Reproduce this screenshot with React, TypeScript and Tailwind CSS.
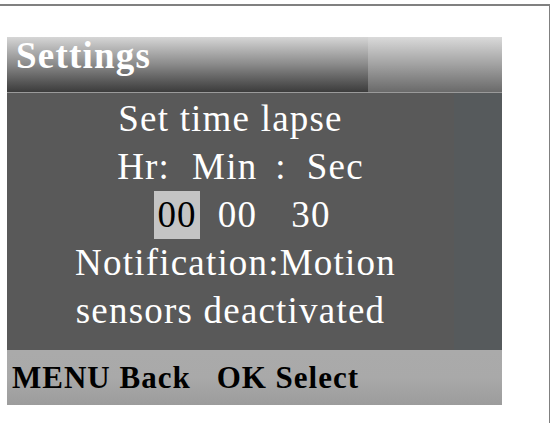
const serif = { fontFamily: '"Liberation Serif", "Times New Roman", serif' };

export default function App() {
  return (
    <div className="w-[551px] h-[423px] bg-white overflow-hidden" style={serif}>
      <div className="mt-[4px] w-[550px] h-[419px] border-t-2 border-r border-[#808080]">
        <div className="ml-[7px] mt-[31px] w-[495px]">
          {/* title bar */}
          <div className="flex h-[55px]">
            <div className="w-[361px] bg-linear-to-b from-[#d6d6d6] via-[#8a8a8a] to-[#3c3c3c] pl-[9px]">
              <span className="block text-[37px] leading-[37px] font-bold tracking-[1.2px] text-white">
                Settings
              </span>
            </div>
            <div className="flex-1 bg-linear-to-b from-[#dadada] via-[#a2a2a2] to-[#6a6a6a]" />
          </div>

          {/* content */}
          <div className="flex h-[258px] border-t border-[#9a9a9a]">
            <div className="w-[447px] bg-[#595959] pt-[2px] text-white text-[37px] leading-[48px] tracking-[1.2px] text-center">
              <div>Set time lapse</div>
              <div className="flex justify-center pl-[20px]">
                <span>Hr:</span>
                <span className="ml-[22px]">Min</span>
                <span className="ml-[18px]">:</span>
                <span className="ml-[20px]">Sec</span>
              </div>
              <div className="flex justify-center pl-[24px]">
                <span className="bg-[#c4c4c4] text-black px-[3px]">00</span>
                <span className="ml-[18px]">00</span>
                <span className="ml-[34px]">30</span>
              </div>
              <div className="pl-[10px]">Notification:Motion</div>
              <div>sensors deactivated</div>
            </div>
            <div className="flex-1 bg-[#565a5c]" />
          </div>

          {/* footer */}
          <div className="h-[55px] bg-linear-to-b from-[#aaaaaa] via-[#a9a9a9] to-[#9c9c9c] pl-[5px] flex text-black text-[31px] leading-[55px] font-bold tracking-[1px]">
            <span>MENU Back</span>
            <span className="ml-[26px]">OK Select</span>
          </div>
        </div>
      </div>
    </div>
  );
}
